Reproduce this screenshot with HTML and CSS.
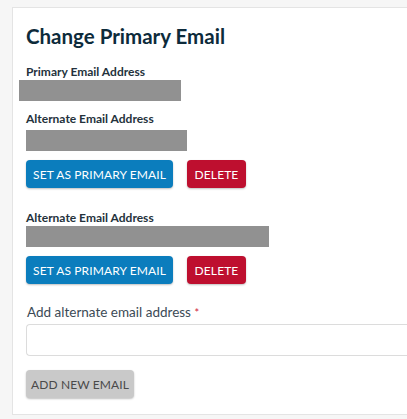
FILE: index.html
```html
<!DOCTYPE html>
<html lang="en">
<head>
<meta charset="utf-8">
<title>Change Primary Email</title>
<link rel="stylesheet" href="styles.css">
</head>
<body>
<div class="card">
  <h1 class="title">Change Primary Email</h1>

  <div class="label">Primary Email Address</div>
  <div class="redact redact-primary"></div>

  <div class="label label-alt1">Alternate Email Address</div>
  <div class="redact redact-alt1"></div>
  <div class="actions">
    <button class="btn btn-blue">SET AS PRIMARY EMAIL</button>
    <button class="btn btn-red">DELETE</button>
  </div>

  <div class="label label-alt2">Alternate Email Address</div>
  <div class="redact redact-alt2"></div>
  <div class="actions">
    <button class="btn btn-blue">SET AS PRIMARY EMAIL</button>
    <button class="btn btn-red">DELETE</button>
  </div>

  <label class="field-label">Add alternate email address <span class="req">*</span></label>
  <div class="input"></div>
  <button class="btn btn-gray">ADD NEW EMAIL</button>
</div>
</body>
</html>
```

FILE: styles.css
```css
html, body {
  margin: 0;
  padding: 0;
}
body {
  background: #f6f6f6;
  font-family: Lato, "Liberation Sans", sans-serif;
  color: #1f3140;
  overflow: hidden;
}
.card {
  margin: 7px 0 0 12px;
  background: #ffffff;
  border: 1px solid #e4e4e4;
  border-right: none;
  padding: 16px 0 16px 13px;
}
.title {
  margin: 0;
  font-size: 20.5px;
  line-height: 24px;
  font-weight: 700;
  color: #0d2b3b;
}
.label {
  font-size: 12px;
  line-height: 14px;
  font-weight: 700;
  color: #24323c;
  margin-top: 17px;
}
.label-alt1 { margin-top: 11px; }
.label-alt2 { margin-top: 23px; }
.redact {
  background: #919191;
  height: 21px;
}
.redact-primary {
  width: 162px;
  margin-left: -7px;
  margin-top: 1px;
}
.redact-alt1 {
  width: 161px;
  margin-top: 4px;
}
.redact-alt2 {
  width: 243px;
  margin-top: 1px;
}
.actions {
  display: flex;
  gap: 14px;
  margin-top: 9px;
}
.btn {
  font-family: Lato, "Liberation Sans", sans-serif;
  font-size: 12px;
  height: 28px;
  border: none;
  border-radius: 4px;
  padding: 0;
  color: #ffffff;
  box-shadow: 0 1px 2px rgba(0,0,0,0.25);
  white-space: nowrap;
  display: block;
  letter-spacing: 0.1px;
}
.btn-blue {
  background: #0b7dbd;
  width: 147px;
}
.btn-red {
  background: #be0f2f;
  width: 59px;
}
.field-label {
  display: block;
  margin-top: 20px;
  font-size: 13.5px;
  line-height: 16px;
  color: #3b4a55;
  padding-left: 1px;
}
.req {
  color: #d0203a;
  font-size: 11px;
}
.input {
  margin-top: 3px;
  height: 32px;
  border: 1px solid #dcdcdc;
  border-right: none;
  border-radius: 4px 0 0 4px;
  box-sizing: border-box;
}
.btn-gray {
  margin-top: 14px;
  background: #c9c9c9;
  color: #4a4a4a;
  width: 108px;
}
```
